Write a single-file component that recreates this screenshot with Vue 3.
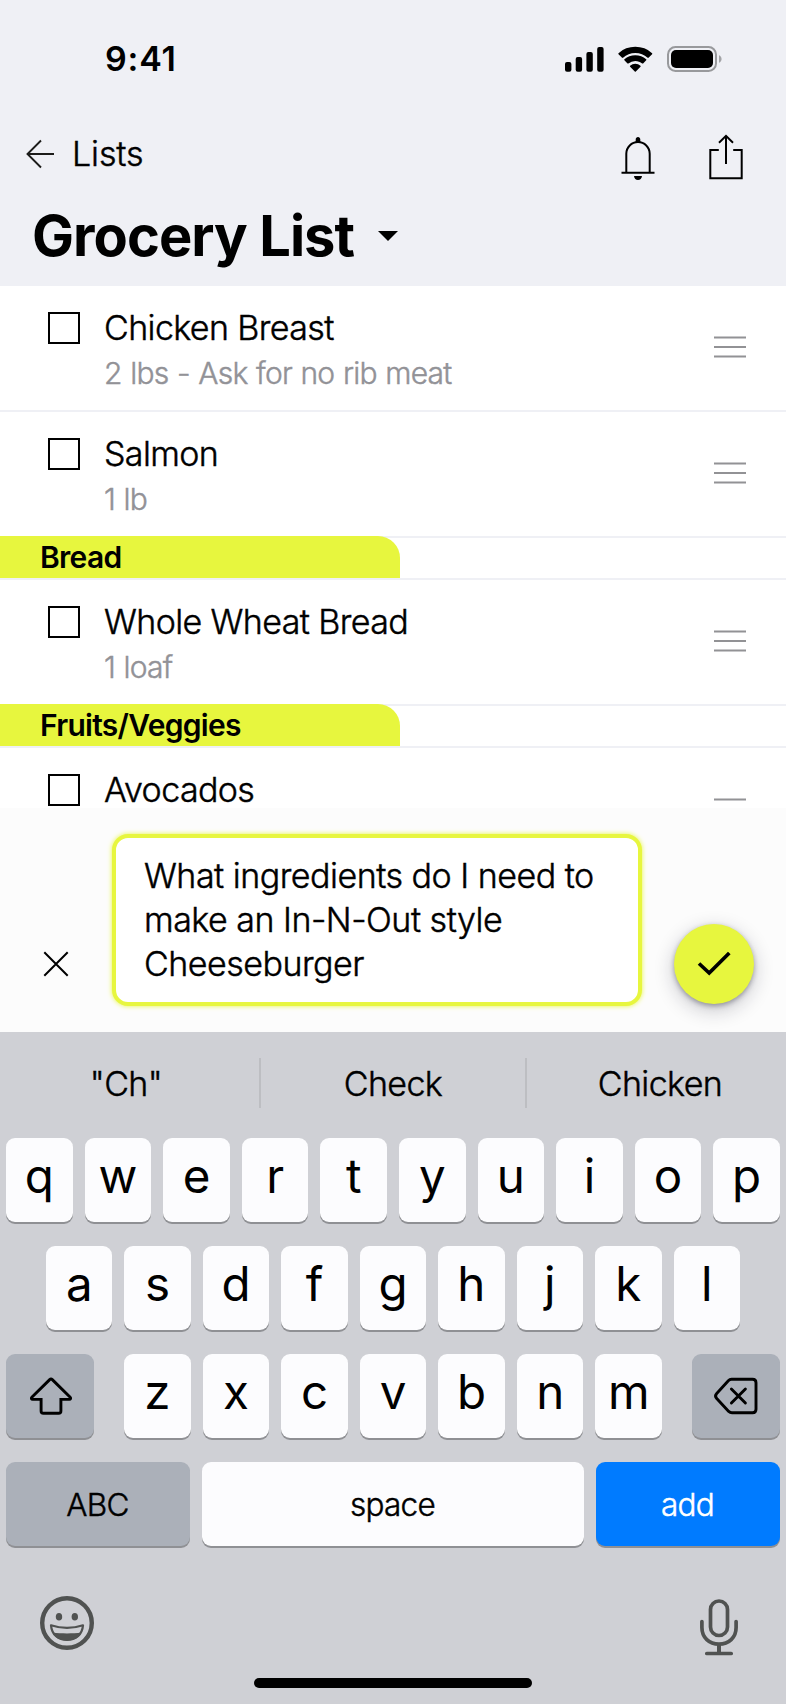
<script setup>
const sections = [
  {
    title: '',
    items: [
      { name: 'Chicken Breast', note: '2 lbs - Ask for no rib meat' },
      { name: 'Salmon', note: '1 lb' },
    ],
  },
  { title: 'Bread', items: [{ name: 'Whole Wheat Bread', note: '1 loaf' }] },
  { title: 'Fruits/Veggies', items: [{ name: 'Avocados', note: '' }] },
]
const suggestions = ['"Ch"', 'Check', 'Chicken']
const rowOne = [...'qwertyuiop']
const rowTwo = [...'asdfghjkl']
const rowThree = [...'zxcvbnm']
</script>

<template>
  <div class="screen">
    <header class="top">
      <div class="status">
        <span class="time">9:41</span>
        <div class="status-icons">
          <svg width="39" height="26" viewBox="0 0 39 26">
            <rect x="0" y="16" width="6.4" height="9.8" rx="2" />
            <rect x="10.7" y="11" width="6.4" height="14.8" rx="2" />
            <rect x="21.4" y="6" width="6.4" height="19.8" rx="2" />
            <rect x="32.2" y="1" width="6.4" height="24.8" rx="2" />
          </svg>
          <svg width="35" height="26" viewBox="0 0 35 26">
            <g transform="translate(0 1.6) scale(1 .97)">
              <path d="M17.3 5.6c4.7 0 9 1.8 12.3 4.9.3.2.7.2.9 0l3.6-3.7c.3-.3.3-.7 0-1A24.2 24.2 0 0 0 .5 5.8c-.3.3-.3.7 0 1l3.6 3.7c.2.2.6.2.9 0A17.9 17.9 0 0 1 17.3 5.6z" />
              <path d="M17.3 13.7c2.6 0 5 .9 6.9 2.6.3.2.7.2.9 0l3.1-3.2c.3-.3.3-.7 0-1a15.9 15.9 0 0 0-21.8 0c-.3.3-.3.7 0 1l3.1 3.2c.2.2.6.2.9 0a10.3 10.3 0 0 1 6.9-2.6z" />
              <path d="M22.5 19.7c.3-.3.3-.7 0-1a7.9 7.9 0 0 0-10.4 0c-.3.3-.3.7 0 1l4.7 5c.3.3.7.3 1 0z" />
            </g>
          </svg>
          <svg width="56" height="26" viewBox="0 0 56 26">
            <rect x="1" y="1" width="48" height="24" rx="7.5" fill="none" stroke="#98999c" stroke-width="2" />
            <rect x="4" y="4" width="42" height="18" rx="5" />
            <path d="M52 9.2c1.5.6 2.6 2.1 2.6 3.8s-1.1 3.2-2.6 3.8z" fill="#a3a4a7" />
          </svg>
        </div>
      </div>
      <nav class="nav">
        <svg width="29" height="28" viewBox="0 0 29 28">
          <path d="M28 14H1.5M15 .5L1.5 14 15 27.5" fill="none" stroke="#1c1c1a" stroke-width="1.9" />
        </svg>
        <span class="back">Lists</span>
        <div class="nav-icons">
          <svg width="34" height="46" viewBox="0 0 34 46">
            <path d="M5.3 38.500V19.700a11.700 11.700 0 0 1 23.400 0v18.800M.5 38.700h33" fill="none" stroke="#000" stroke-width="2" />
            <path d="M14.700 8.300V5.400c0-1.400 1-2.400 2.300-2.400s2.300 1 2.300 2.400v2.900zM13 42h8c-.3 2.500-1.800 4-4 4s-3.700-1.500-4-4z" />
          </svg>
          <svg width="34" height="46" viewBox="0 0 34 46">
            <path d="M9.800 16H1.300v28.200h31.400V16h-8.500M17 30V2M10 8.700L17 1.900l7 6.800" fill="none" stroke="#000" stroke-width="2" />
          </svg>
        </div>
      </nav>
      <div class="title-row">
        <h1>Grocery List</h1>
        <svg width="20" height="10" viewBox="0 0 20 10"><path d="M0 0h20L10 10z" /></svg>
      </div>
    </header>

    <main class="list">
      <section v-for="s in sections" :key="s.title">
        <div v-if="s.title" class="section-head"><h2>{{ s.title }}</h2></div>
        <div v-for="i in s.items" :key="i.name" class="item">
          <span class="box"></span>
          <div class="copy">
            <div class="name">{{ i.name }}</div>
            <div v-if="i.note" class="note">{{ i.note }}</div>
          </div>
          <svg class="handle" width="32" height="21" viewBox="0 0 32 21">
            <path d="M0 1.5h32M0 11h32M0 20.5h32" stroke="#929295" stroke-width="2" />
          </svg>
        </div>
      </section>
    </main>

    <section class="composer">
      <svg class="close" width="26" height="26" viewBox="0 0 26 26">
        <path d="M1.3 1.3l23.4 23.4M24.7 1.3L1.3 24.7" stroke="#000" stroke-width="2" />
      </svg>
      <div class="field">What ingredients do I need to<br />make an In-N-Out style<br />Cheeseburger</div>
      <div class="confirm">
        <svg width="34" height="26" viewBox="0 0 34 26">
          <path d="M2 12.5L12.2 22 32.3 2" fill="none" stroke="#000" stroke-width="3.7" />
        </svg>
      </div>
    </section>

    <section class="keyboard">
      <div class="suggestions">
        <span v-for="w in suggestions" :key="w" class="suggestion">{{ w }}</span>
      </div>
      <div class="keys">
        <div class="row">
          <span v-for="k in rowOne" :key="k" class="key">{{ k }}</span>
        </div>
        <div class="row inset">
          <span v-for="k in rowTwo" :key="k" class="key">{{ k }}</span>
        </div>
        <div class="row">
          <span class="key dark wide shift">
            <svg width="44" height="38" viewBox="0 0 44 38">
              <path d="M20.7 2.6L2.8 20.3c-.9.9-.4 2.1.9 2.1h8.4V34c0 1.5.8 2.3 2.3 2.3h15.2c1.5 0 2.3-.8 2.3-2.3V22.4h8.4c1.3 0 1.8-1.2.9-2.1L23.3 2.6c-.8-.8-1.8-.8-2.6 0z" fill="none" stroke="#000" stroke-width="2.9" />
            </svg>
          </span>
          <div class="letters">
            <span v-for="k in rowThree" :key="k" class="key">{{ k }}</span>
          </div>
          <span class="key dark wide">
            <svg width="44" height="38" viewBox="0 0 44 38">
              <path d="M17.5 2.3H38.5c2.2 0 3.5 1.300 3.500 3.500v26.400c0 2.200-1.300 3.500-3.500 3.500H18c-1.500 0-2.300-.4-3.300-1.300L2.700 21.500c-1.500-1.600-1.500-3.400 0-5L14.300 3.700c1-1 1.800-1.400 3.200-1.400z" fill="none" stroke="#000" stroke-width="2.9" />
              <path d="M17.400 12l14 14M31.400 12l-14 14" stroke="#000" stroke-width="2.9" stroke-linecap="round" />
            </svg>
          </span>
        </div>
        <div class="row">
          <span class="key dark word side">ABC</span>
          <span class="key word space">space</span>
          <span class="key blue word side">add</span>
        </div>
      </div>
      <div class="bottom">
        <svg width="54" height="54" viewBox="0 0 54 54">
          <circle cx="27" cy="27" r="24.8" fill="none" stroke="#505251" stroke-width="4.4" />
          <ellipse cx="19" cy="20.7" rx="3.2" ry="3.8" fill="#505251" />
          <ellipse cx="34.8" cy="20.7" rx="3.2" ry="3.8" fill="#505251" />
          <path d="M11 29.3c10 3.300 22 3.300 32 0-.8 9.500-7.500 14.700-16 14.700S11.800 38.800 11 29.300z" fill="none" stroke="#505251" stroke-width="2.2" stroke-linejoin="round" />
          <path d="M12.500 36.500c9 1.200 20 1.200 29 0C39.500 41.700 34 44.500 27 44.500s-12.500-3-14.500-8z" fill="#505251" />
        </svg>
        <svg class="mic" width="38" height="58" viewBox="0 0 38 58">
          <rect x="10.500" y="2" width="17" height="34.500" rx="8.500" fill="none" stroke="#505251" stroke-width="3.7" />
          <path d="M1.900 22.500v6c0 10 7.300 16.700 17.100 16.700s17.100-6.700 17.100-16.700v-6M6.800 54.500h24.400" fill="none" stroke="#505251" stroke-width="3.7" stroke-linecap="round" />
          <path d="M19 45v9" stroke="#505251" stroke-width="4" />
        </svg>
      </div>
      <div class="home"></div>
    </section>
  </div>
</template>

<style>
body {
  margin: 0;
}
</style>

<style scoped>
.screen {
  width: 786px;
  height: 1704px;
  overflow: hidden;
  display: flex;
  flex-direction: column;
  background: #fff;
  color: #000;
  font-family: "Inter", "Liberation Sans", sans-serif;
  font-size: 34px;
  font-weight: 300;
  line-height: 44px;
  letter-spacing: -0.61px;
}
/* Thickens the light weight to sit between light and regular. */
.back,
.name,
.note,
.field,
.suggestion,
.word {
  -webkit-text-stroke: 0.45px currentColor;
}
svg {
  display: block;
  flex: none;
  overflow: visible;
}
.top {
  height: 286px;
  flex: none;
  background: #eff0f5;
}
.status {
  height: 118px;
  box-sizing: border-box;
  padding: 37px 63px 0 105px;
  display: flex;
  justify-content: space-between;
}
.time {
  font-weight: 600;
  letter-spacing: 0.8px;
}
.status-icons {
  display: flex;
  align-items: flex-start;
  gap: 14px;
  padding-top: 9px;
}
.nav {
  height: 72px;
  box-sizing: border-box;
  padding: 0 43px 0 26px;
  display: flex;
  align-items: center;
}
.back {
  margin-left: 17px;
  letter-spacing: -0.1px;
}
.nav-icons {
  display: flex;
  gap: 54px;
  margin: 6px 0 0 auto;
}
.title-row {
  display: flex;
  align-items: center;
  padding: 12px 0 0 32px;
}
h1 {
  margin: 0;
  font-size: 56px;
  line-height: 68px;
  font-weight: 700;
  letter-spacing: -0.95px;
}
.title-row svg {
  margin-left: 24px;
}
.list {
  height: 522px;
  flex: none;
  overflow: hidden;
}
.section-head {
  height: 44px;
  margin-top: -2px;
  box-sizing: border-box;
  border-bottom: 2px solid #eff0f5;
}
h2 {
  margin: 0;
  width: 400px;
  height: 42px;
  box-sizing: border-box;
  padding-left: 40px;
  border-top-right-radius: 22px;
  background: #e7f63e;
  font-size: 30px;
  line-height: 42px;
  font-weight: 600;
  letter-spacing: -0.72px;
}
.item {
  height: 126px;
  box-sizing: border-box;
  border-bottom: 2px solid #eff0f5;
  padding: 24px 40px 0 48px;
  display: flex;
  align-items: flex-start;
}
.box {
  width: 32px;
  height: 32px;
  box-sizing: border-box;
  border: 2px solid #000;
  margin-top: 2px;
}
.copy {
  flex: 1;
  margin-left: 24px;
}
.name {
  line-height: 36px;
}
.note {
  margin-top: 5px;
  font-size: 30px;
  letter-spacing: -0.78px;
  word-spacing: 0.9px;
  color: #929297;
}
.handle {
  margin-top: 26px;
}
.composer {
  height: 224px;
  flex: none;
  box-sizing: border-box;
  background: #fcfcfc;
  padding: 26px 32px 26px 43px;
  display: flex;
  align-items: flex-end;
}
.close {
  margin-bottom: 29px;
}
.field {
  width: 530px;
  height: 172px;
  box-sizing: border-box;
  margin-left: 43px;
  border: 4px solid #e7f63e;
  border-radius: 16px;
  background: #fff;
  padding: 16px 0 0 28px;
  letter-spacing: -0.5px;
  box-shadow: 0 0 5px #e7f63e;
}
.confirm {
  width: 80px;
  height: 80px;
  margin: 0 0 2px auto;
  border-radius: 50%;
  background: #e7f63e;
  box-shadow: 0 2px 5px rgba(20, 20, 40, 0.35), 0 6px 20px rgba(20, 20, 40, 0.24);
  display: flex;
  align-items: center;
  justify-content: center;
}
.keyboard {
  flex: 1;
  background: #cfd0d5;
  display: flex;
  flex-direction: column;
}
.suggestions {
  height: 102px;
  margin-bottom: 4px;
  display: flex;
  align-items: center;
}
.suggestion {
  flex: 0 0 259px;
  box-sizing: border-box;
  height: 50px;
  line-height: 52px;
  text-align: center;
  letter-spacing: -0.6px;
}
.suggestion:first-child {
  padding-right: 7px;
}
.suggestion:last-child {
  padding-left: 7px;
}
.suggestion:nth-child(2) {
  flex-basis: 268px;
  border: solid #bdbec2;
  border-width: 0 2px;
}
.keys {
  padding: 0 6px;
  display: flex;
  flex-direction: column;
  gap: 24px;
}
.row {
  height: 84px;
  display: flex;
  gap: 12px;
}
.inset {
  padding: 0 40px;
}
.letters {
  flex: 1;
  display: flex;
  gap: 12px;
  margin: 0 18px;
}
.key {
  flex: 1 1 0;
  min-width: 0;
  display: flex;
  align-items: center;
  justify-content: center;
  border-radius: 9px;
  background: #fcfcfe;
  box-shadow: 0 2px 0 #8f9094;
  font-size: 47.5px;
  font-weight: 400;
  line-height: 75px;
  padding: 0 0 9px;
  box-sizing: border-box;
  letter-spacing: 0;
}
.dark {
  background: #abb0b9;
}
.blue {
  background: #007bff;
  color: #fff;
}
.wide {
  flex: 0 0 88px;
  padding: 0 0 1px;
}
.shift {
  padding-left: 2px;
}
.word {
  font-size: 31.5px;
  font-weight: 300;
  line-height: 84px;
  padding: 1px 1px 0 0;
  letter-spacing: -0.7px;
}
.side {
  flex: 0 0 184px;
}
.bottom {
  display: flex;
  justify-content: space-between;
  align-items: flex-start;
  height: 58px;
  padding: 50px 48px 0 40px;
}
.mic {
  margin-top: 3px;
}
.home {
  width: 278px;
  height: 10px;
  margin: 24px auto 0;
  border-radius: 5px;
  background: #000;
}
</style>
